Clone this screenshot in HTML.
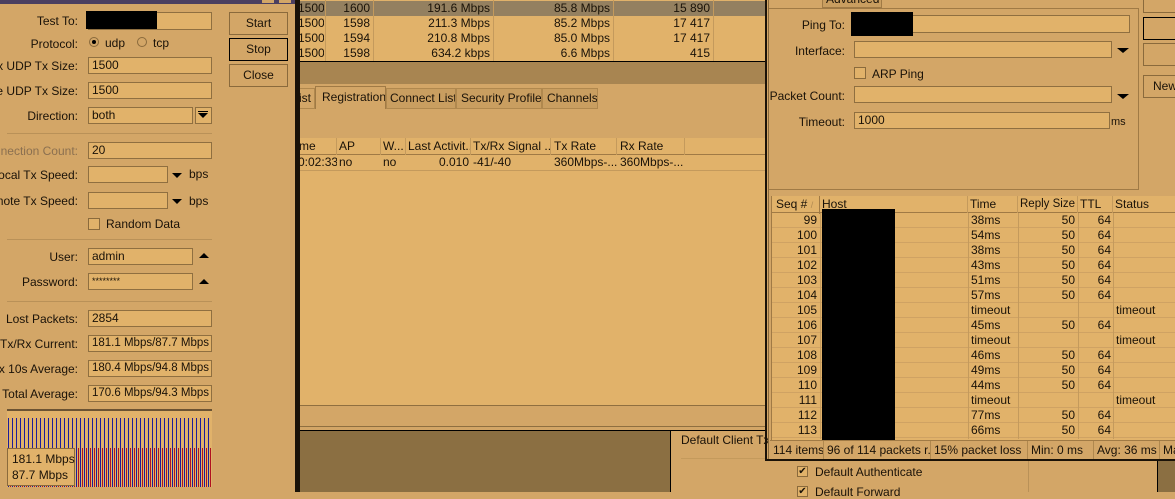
<!DOCTYPE html>
<html><head><meta charset="utf-8"><style>
*{margin:0;padding:0;box-sizing:border-box}
body{width:1175px;height:492px;overflow:hidden;background:#d3a667;font-family:"Liberation Sans",sans-serif;font-size:12px;color:#1a1208;position:relative}
.a{position:absolute;white-space:nowrap}
.lbl{position:absolute;width:78px;left:0;white-space:nowrap;overflow:hidden;display:flex;justify-content:flex-end}
.in{position:absolute;background:#e1b26a;border:1px solid #8f6f40;height:17px;line-height:15px;padding-left:3px;white-space:nowrap;overflow:hidden}
.btn{position:absolute;border:1px solid #8a6a3c;text-align:center;line-height:20px;background:#d3a667}
.cell{position:absolute;white-space:nowrap;overflow:hidden}
.r{text-align:right}
.tri{position:absolute;width:0;height:0;border-left:6px solid transparent;border-right:6px solid transparent}
.down{border-top:6px solid #000}
.up{border-bottom:6px solid #000}
.sep{position:absolute;height:1px;background:#b99158}
</style></head><body>

<!-- LEFT WINDOW -->
<div class="a" style="left:0;top:0;width:296px;height:492px;background:#d3a667"></div>
<div class="a" style="left:0;top:0;width:296px;height:4px;background:#4b3f60"></div>
<div class="a" style="left:262px;top:0;width:12px;height:3px;background:#d3a667"></div>
<div class="a" style="left:279px;top:0;width:12px;height:3px;background:#d3a667"></div>
<div class="a" style="left:295px;top:0;width:3px;height:492px;background:#1a1208"></div>

<div class="lbl" style="top:14px"><span>Test To:</span></div>
<div class="in" style="left:88px;top:12px;width:124px;height:18px"></div>
<div class="a" style="left:86px;top:11px;width:71px;height:18px;background:#000"></div>
<div class="lbl" style="top:37px"><span>Protocol:</span></div>
<div class="a" style="left:89px;top:37px;width:10px;height:10px;border-radius:50%;border:1px solid #8a6a3c;background:#d3a667"></div>
<div class="a" style="left:92px;top:40px;width:4px;height:4px;border-radius:50%;background:#000"></div>
<div class="a" style="left:105px;top:36px">udp</div>
<div class="a" style="left:137px;top:37px;width:10px;height:10px;border-radius:50%;border:1px solid #8a6a3c"></div>
<div class="a" style="left:153px;top:36px">tcp</div>
<div class="lbl" style="top:59px"><span>Max UDP Tx Size:</span></div>
<div class="in" style="left:88px;top:57px;width:124px">1500</div>
<div class="lbl" style="top:84px"><span>Remote UDP Tx Size:</span></div>
<div class="in" style="left:88px;top:82px;width:124px">1500</div>
<div class="lbl" style="top:109px"><span>Direction:</span></div>
<div class="in" style="left:88px;top:107px;width:105px">both</div>
<div class="in" style="left:195px;top:107px;width:17px;padding:0"></div>
<div class="tri down" style="left:198px;top:113px;border-width:5px 5px 0 5px"></div>
<div class="a" style="left:198px;top:111px;width:10px;height:1px;background:#000"></div>
<div class="sep" style="left:7px;top:133px;width:205px"></div>
<div class="lbl" style="top:144px;color:#8b7050"><span>Connection Count:</span></div>
<div class="in" style="left:88px;top:142px;width:124px">20</div>
<div class="lbl" style="top:168px"><span>Local Tx Speed:</span></div>
<div class="in" style="left:88px;top:166px;width:80px"></div>
<div class="tri down" style="left:172px;top:173px;border-width:5px 5px 0 5px"></div>
<div class="a" style="left:189px;top:167px">bps</div>
<div class="lbl" style="top:194px"><span>Remote Tx Speed:</span></div>
<div class="in" style="left:88px;top:192px;width:80px"></div>
<div class="tri down" style="left:172px;top:199px;border-width:5px 5px 0 5px"></div>
<div class="a" style="left:189px;top:194px">bps</div>
<div class="a" style="left:88px;top:218px;width:12px;height:12px;border:1px solid #8a6a3c;background:#e1b26a"></div>
<div class="a" style="left:106px;top:217px">Random Data</div>
<div class="sep" style="left:7px;top:239px;width:205px"></div>
<div class="lbl" style="top:250px"><span>User:</span></div>
<div class="in" style="left:88px;top:248px;width:105px">admin</div>
<div class="tri up" style="left:199px;top:253px;border-width:0 5px 5px 5px"></div>
<div class="lbl" style="top:275px"><span>Password:</span></div>
<div class="in" style="left:88px;top:273px;width:105px;font-size:9px">********</div>
<div class="tri up" style="left:199px;top:279px;border-width:0 5px 5px 5px"></div>
<div class="sep" style="left:7px;top:301px;width:205px"></div>
<div class="lbl" style="top:312px"><span>Lost Packets:</span></div>
<div class="in" style="left:88px;top:310px;width:124px">2854</div>
<div class="lbl" style="top:337px"><span>Tx/Rx Current:</span></div>
<div class="in" style="left:88px;top:335px;width:124px;font-size:11.5px">181.1 Mbps/87.7 Mbps</div>
<div class="lbl" style="top:362px"><span>Tx/Rx 10s Average:</span></div>
<div class="in" style="left:88px;top:360px;width:124px;font-size:11.5px">180.4 Mbps/94.8 Mbps</div>
<div class="lbl" style="top:387px"><span>Total Average:</span></div>
<div class="in" style="left:88px;top:385px;width:124px;font-size:11.5px">170.6 Mbps/94.3 Mbps</div>

<!-- graph -->
<div class="a" style="left:7px;top:409px;width:205px;height:2px;background:#6b5333"></div>
<div class="a" style="left:7px;top:411px;width:205px;height:76px;background:#e1b26a"></div>
<div class="a" style="left:8px;top:418px;width:203px;height:69px;background:repeating-linear-gradient(90deg,#1c1c9a 0 1px,transparent 1px 4px)"></div>
<div class="a" style="left:10px;top:448px;width:201px;height:39px;background:repeating-linear-gradient(90deg,#b01020 0 1px,transparent 1px 4px)"></div>
<div class="a" style="left:7px;top:448px;width:68px;height:38px;background:#e1b26a;border:1px solid #8a6a3c;padding:2px 4px;line-height:16px">181.1 Mbps<br>87.7 Mbps</div>

<div class="btn" style="left:229px;top:12px;width:59px;height:23px">Start</div>
<div class="btn" style="left:229px;top:38px;width:59px;height:23px;border-color:#000">Stop</div>
<div class="btn" style="left:229px;top:64px;width:59px;height:23px">Close</div>

<!-- MIDDLE -->
<div class="a" style="left:298px;top:0;width:468px;height:61px;background:#e1b26a"></div>
<div class="a" style="left:298px;top:1px;width:468px;height:15px;background:#948060"></div>
<div class="a" style="left:298px;top:61px;width:468px;height:1px;background:#000"></div>
<div class="a" style="left:298px;top:62px;width:468px;height:22px;background:#a88551"></div>
<div class="a" style="left:325px;top:0;width:1px;height:61px;background:#c49a5c"></div>
<div class="a" style="left:373px;top:0;width:1px;height:61px;background:#c49a5c"></div>
<div class="a" style="left:493px;top:0;width:1px;height:61px;background:#c49a5c"></div>
<div class="a" style="left:613px;top:0;width:1px;height:61px;background:#c49a5c"></div>
<div class="a" style="left:713px;top:0;width:1px;height:61px;background:#c49a5c"></div>
<div class="a" style="left:298px;top:1px;line-height:15px">
<div class="cell" style="left:0;width:26px">1500</div>
<div class="cell r" style="left:22px;width:50px">1600</div>
<div class="cell r" style="left:92px;width:100px">191.6 Mbps</div>
<div class="cell r" style="left:212px;width:100px">85.8 Mbps</div>
<div class="cell r" style="left:332px;width:80px">15 890</div>
<div class="cell" style="top:15px;left:0;width:26px">1500</div>
<div class="cell r" style="top:15px;left:22px;width:50px">1598</div>
<div class="cell r" style="top:15px;left:92px;width:100px">211.3 Mbps</div>
<div class="cell r" style="top:15px;left:212px;width:100px">85.2 Mbps</div>
<div class="cell r" style="top:15px;left:332px;width:80px">17 417</div>
<div class="cell" style="top:30px;left:0;width:26px">1500</div>
<div class="cell r" style="top:30px;left:22px;width:50px">1594</div>
<div class="cell r" style="top:30px;left:92px;width:100px">210.8 Mbps</div>
<div class="cell r" style="top:30px;left:212px;width:100px">85.0 Mbps</div>
<div class="cell r" style="top:30px;left:332px;width:80px">17 417</div>
<div class="cell" style="top:45px;left:0;width:26px">1500</div>
<div class="cell r" style="top:45px;left:22px;width:50px">1598</div>
<div class="cell r" style="top:45px;left:92px;width:100px">634.2 kbps</div>
<div class="cell r" style="top:45px;left:212px;width:100px">6.6 Mbps</div>
<div class="cell r" style="top:45px;left:332px;width:80px">415</div>
</div>

<!-- tabs -->
<div class="a" style="left:298px;top:88px;width:17px;height:21px;border:1px solid #b0884e;border-left:none;line-height:19px;padding-left:1px;overflow:hidden">ist</div>
<div class="a" style="left:315px;top:86px;width:71px;height:23px;border:1px solid #a07a45;border-bottom:none;line-height:20px;padding-left:6px;background:#d3a667;overflow:hidden">Registration</div>
<div class="a" style="left:386px;top:88px;width:70px;height:21px;border:1px solid #b0884e;line-height:19px;padding-left:3px;background:#c99e60;overflow:hidden">Connect List</div>
<div class="a" style="left:456px;top:88px;width:86px;height:21px;border:1px solid #b0884e;line-height:19px;padding-left:4px;background:#c99e60;overflow:hidden">Security Profiles</div>
<div class="a" style="left:542px;top:88px;width:56px;height:21px;border:1px solid #b0884e;line-height:19px;padding-left:4px;background:#c99e60;overflow:hidden">Channels</div>

<div class="a" style="left:298px;top:138px;width:468px;height:267px;background:#e1b26a;border-top:1px solid #a07a45"></div>
<div class="a" style="left:298px;top:138px;width:468px;height:17px;border-bottom:1px solid #a07a45;background:#e1b26a;line-height:17px">
<div class="cell" style="left:0;width:39px;border-right:1px solid #c49a5c;padding-left:1px">me</div>
<div class="cell" style="left:39px;width:44px;border-right:1px solid #c49a5c;padding-left:2px">AP</div>
<div class="cell" style="left:83px;width:25px;border-right:1px solid #c49a5c;padding-left:2px">W...</div>
<div class="cell" style="left:108px;width:65px;border-right:1px solid #c49a5c;padding-left:2px">Last Activit...</div>
<div class="cell" style="left:173px;width:80px;border-right:1px solid #c49a5c;padding-left:2px">Tx/Rx Signal ...</div>
<div class="cell" style="left:253px;width:66px;border-right:1px solid #c49a5c;padding-left:3px">Tx Rate</div>
<div class="cell" style="left:319px;width:68px;border-right:1px solid #c49a5c;padding-left:3px">Rx Rate</div>
</div>
<div class="a" style="left:298px;top:155px;width:468px;height:16px;line-height:15px;border-bottom:1px solid #c49a5c">
<div class="cell" style="left:0;width:39px">0:02:33</div>
<div class="cell" style="left:41px;width:40px">no</div>
<div class="cell" style="left:85px;width:22px">no</div>
<div class="cell r" style="left:108px;width:63px">0.010</div>
<div class="cell" style="left:175px;width:78px">-41/-40</div>
<div class="cell" style="left:256px;width:63px">360Mbps-...</div>
<div class="cell" style="left:322px;width:63px">360Mbps-...</div>
</div>
<div class="a" style="left:298px;top:405px;width:468px;height:1px;background:#8f6f40"></div>
<div class="a" style="left:298px;top:406px;width:468px;height:20px;background:#d3a667"></div>
<div class="a" style="left:298px;top:426px;width:468px;height:1px;background:#8f6f40"></div>
<div class="a" style="left:298px;top:430px;width:468px;height:1px;background:#000"></div>
<div class="a" style="left:298px;top:431px;width:372px;height:61px;background:#8b6f42"></div>
<div class="a" style="left:670px;top:431px;width:1px;height:61px;background:#000"></div>
<div class="a" style="left:681px;top:433px">Default Client Tx F</div>
<div class="a" style="left:681px;top:458px;width:90px;height:1px;background:#c49a5c"></div>
<div class="a" style="left:298px;top:0;width:2px;height:492px;background:#1a1208"></div>
<div class="a" style="left:766px;top:0;width:1px;height:430px;background:#1a1208"></div>

<!-- PING WINDOW -->
<div class="a" style="left:768px;top:0;width:407px;height:461px;background:#d3a667;border-left:1px solid #8a6a3c"></div>
<div class="a" style="left:822px;top:-6px;width:60px;height:14px;border:1px solid #a07a45;border-top:none;background:#c99e60;line-height:10px;padding-left:3px;overflow:hidden">Advanced</div>
<div class="a" style="left:769px;top:8px;width:370px;height:182px;border:1px solid #a07a45;border-left:none"></div>
<div class="lbl" style="left:767px;width:78px;top:18px"><span>Ping To:</span></div>
<div class="in" style="left:853px;top:15px;width:277px;height:18px"></div>
<div class="a" style="left:851px;top:12px;width:62px;height:24px;background:#000"></div>
<div class="lbl" style="left:767px;width:78px;top:44px"><span>Interface:</span></div>
<div class="in" style="left:854px;top:41px;width:258px"></div>
<div class="tri down" style="left:1117px;top:48px;border-width:5px 6px 0 6px"></div>
<div class="a" style="left:854px;top:67px;width:12px;height:12px;border:1px solid #8a6a3c;background:#e1b26a"></div>
<div class="a" style="left:872px;top:67px">ARP Ping</div>
<div class="lbl" style="left:767px;width:78px;top:89px"><span>Packet Count:</span></div>
<div class="in" style="left:854px;top:86px;width:258px"></div>
<div class="tri down" style="left:1117px;top:94px;border-width:5px 6px 0 6px"></div>
<div class="lbl" style="left:767px;width:78px;top:115px"><span>Timeout:</span></div>
<div class="in" style="left:854px;top:112px;width:256px">1000</div>
<div class="a" style="left:1111px;top:116px;font-size:11px">ms</div>

<div class="a" style="left:1143px;top:-2px;width:40px;height:15px;border:1px solid #8a6a3c"></div>
<div class="a" style="left:1143px;top:17px;width:40px;height:23px;border:1px solid #000"></div>
<div class="a" style="left:1143px;top:43px;width:40px;height:23px;border:1px solid #8a6a3c"></div>
<div class="a" style="left:1143px;top:75px;width:40px;height:23px;border:1px solid #8a6a3c;line-height:21px;padding-left:9px">New</div>

<!-- ping table -->
<div class="a" style="left:771px;top:196px;width:404px;height:244px;background:#e1b26a;border-top:1px solid #a07a45;border-left:1px solid #a07a45"></div>
<div class="a" style="left:772px;top:196px;width:403px;height:17px;line-height:17px;background:#e1b26a;border-bottom:1px solid #a07a45">
<div class="cell" style="left:0;width:48px;border-right:1px solid #a07a45;padding-left:4px">Seq # <span style="color:#b08a52;font-size:9px">/</span></div>
<div class="cell" style="left:48px;width:148px;border-right:1px solid #c49a5c;padding-left:2px">Host</div>
<div class="cell" style="left:196px;width:50px;border-right:1px solid #c49a5c;padding-left:2px">Time</div>
<div class="cell" style="left:246px;width:60px;border-right:1px solid #c49a5c;padding-left:2px;font-size:11.5px">Reply Size</div>
<div class="cell" style="left:306px;width:35px;border-right:1px solid #c49a5c;padding-left:2px">TTL</div>
<div class="cell" style="left:341px;width:62px;padding-left:2px">Status</div>
</div>
<div class="a" style="left:772px;top:213px;width:403px;height:226px;line-height:15px;background:repeating-linear-gradient(180deg,transparent 0 14px,#cfa263 14px 15px)">
<div class="a" style="left:48px;top:0;width:1px;height:226px;background:#c49a5c"></div>
<div class="a" style="left:196px;top:0;width:1px;height:226px;background:#c49a5c"></div>
<div class="a" style="left:246px;top:0;width:1px;height:226px;background:#c49a5c"></div>
<div class="a" style="left:306px;top:0;width:1px;height:226px;background:#c49a5c"></div>
<div class="a" style="left:341px;top:0;width:1px;height:226px;background:#c49a5c"></div>
<div class="a" style="left:0;top:0;width:45px;text-align:right">99<br>100<br>101<br>102<br>103<br>104<br>105<br>106<br>107<br>108<br>109<br>110<br>111<br>112<br>113</div>
<div class="a" style="left:199px;top:0">38ms<br>54ms<br>38ms<br>43ms<br>51ms<br>57ms<br>timeout<br>45ms<br>timeout<br>46ms<br>49ms<br>44ms<br>timeout<br>77ms<br>66ms</div>
<div class="a" style="left:246px;top:0;width:57px;text-align:right">50<br>50<br>50<br>50<br>50<br>50<br>&nbsp;<br>50<br>&nbsp;<br>50<br>50<br>50<br>&nbsp;<br>50<br>50</div>
<div class="a" style="left:306px;top:0;width:33px;text-align:right">64<br>64<br>64<br>64<br>64<br>64<br>&nbsp;<br>64<br>&nbsp;<br>64<br>64<br>64<br>&nbsp;<br>64<br>64</div>
<div class="a" style="left:344px;top:0">&nbsp;<br>&nbsp;<br>&nbsp;<br>&nbsp;<br>&nbsp;<br>&nbsp;<br>timeout<br>&nbsp;<br>timeout<br>&nbsp;<br>&nbsp;<br>&nbsp;<br>timeout</div>
</div>
<div class="a" style="left:822px;top:209px;width:73px;height:231px;background:#000"></div>
<div class="a" style="left:770px;top:440px;width:405px;height:19px;background:#d3a667;border-top:1px solid #a07a45;line-height:18px">
<div class="cell" style="left:0;width:54px;border-right:1px solid #b0884e;padding-left:3px">114 items</div>
<div class="cell" style="left:54px;width:107px;border-right:1px solid #b0884e;padding-left:3px">96 of 114 packets r...</div>
<div class="cell" style="left:161px;width:97px;border-right:1px solid #b0884e;padding-left:3px">15% packet loss</div>
<div class="cell" style="left:258px;width:66px;border-right:1px solid #b0884e;padding-left:3px">Min: 0 ms</div>
<div class="cell" style="left:324px;width:66px;border-right:1px solid #b0884e;padding-left:3px">Avg: 36 ms</div>
<div class="cell" style="left:390px;width:20px;padding-left:3px">Ma</div>
</div>
<div class="a" style="left:765px;top:459px;width:410px;height:2px;background:#1a1208"></div>
<div class="a" style="left:765px;top:0;width:2px;height:461px;background:#1a1208"></div>

<!-- below ping -->
<div class="a" style="left:1028px;top:461px;width:1px;height:31px;background:#b99158"></div>
<div class="a" style="left:1157px;top:461px;width:18px;height:31px;background:#8b6f42;border-left:1px solid #000"></div>
<div class="a" style="left:797px;top:466px;width:11px;height:11px;border:1px solid #8a6a3c;background:#e1b26a;font-size:10px;line-height:9px;text-align:center">✔</div>
<div class="a" style="left:815px;top:465px">Default Authenticate</div>
<div class="a" style="left:797px;top:486px;width:11px;height:11px;border:1px solid #8a6a3c;background:#e1b26a;font-size:10px;line-height:9px;text-align:center">✔</div>
<div class="a" style="left:815px;top:485px">Default Forward</div>
</body></html>
